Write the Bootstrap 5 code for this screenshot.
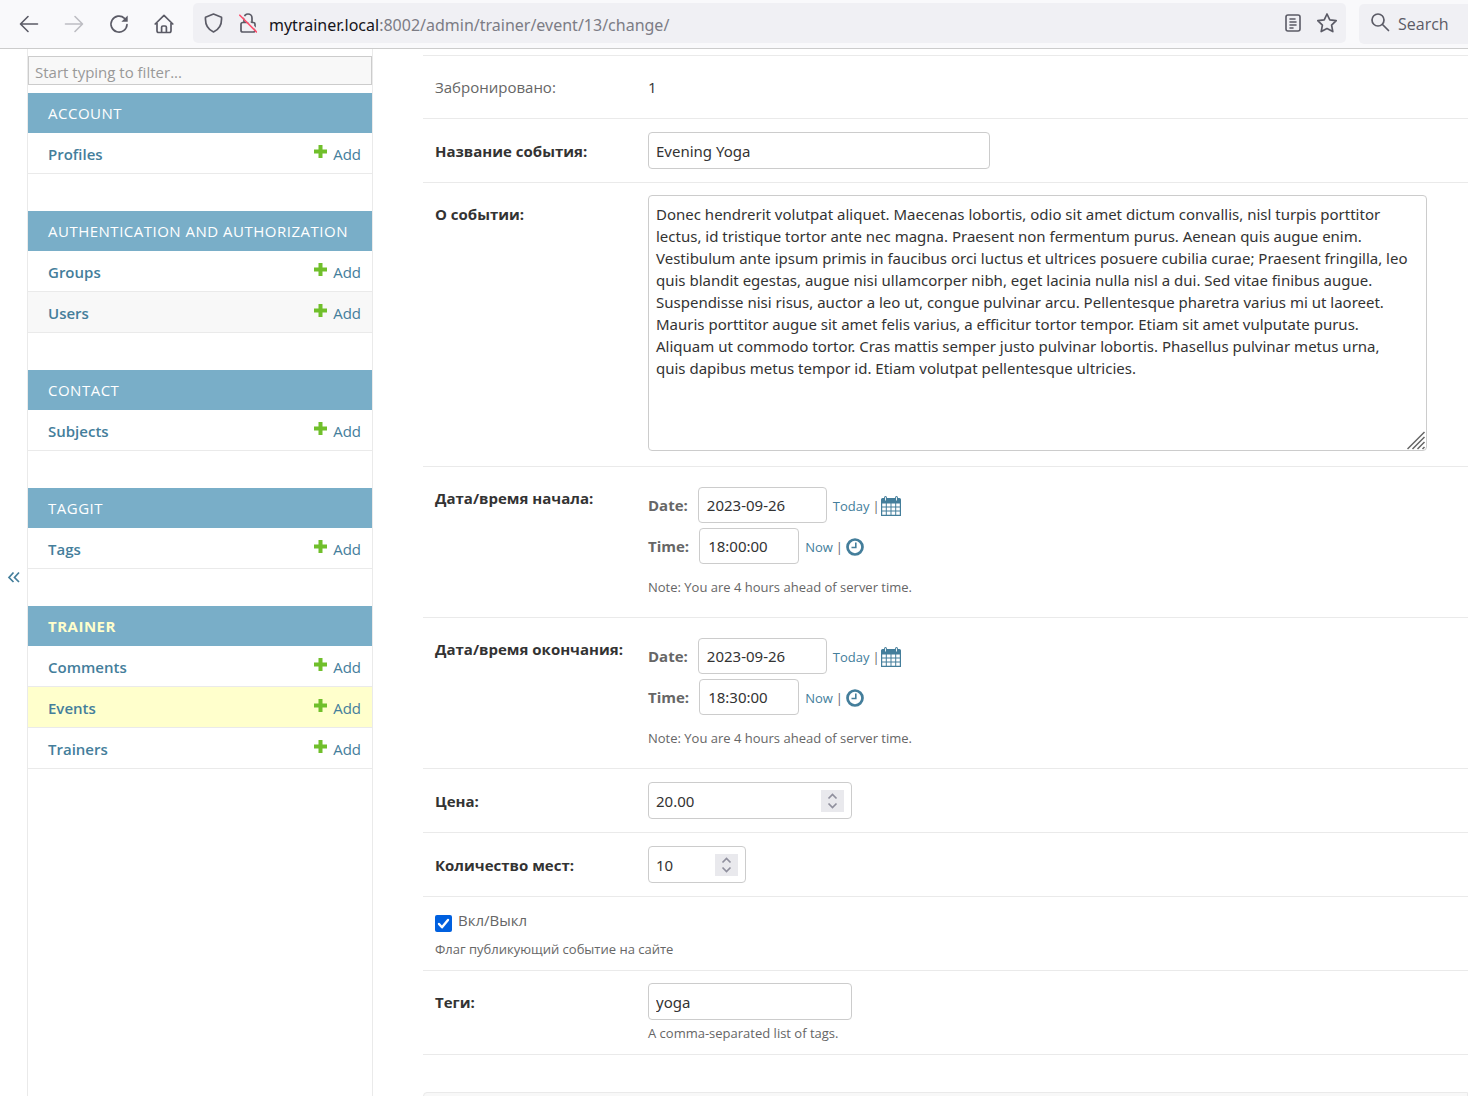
<!DOCTYPE html>
<html lang="ru">
<head>
<meta charset="utf-8">
<meta name="viewport" content="width=device-width, initial-scale=1">
<title>Change event</title>
<link href="https://cdn.jsdelivr.net/npm/bootstrap@5.3.0/dist/css/bootstrap.min.css" rel="stylesheet">
<style>
  body { font-family: "Open Sans", "Noto Sans", sans-serif; font-size: 15px; line-height: 22px; color: #333; background: #fff; }
  a { color: #447e9b; text-decoration: none; }
  svg { display: block; flex: none; }
  button { color: inherit; }

  .browser-bar { height: 49px; background: #f9f9fb; border-bottom: 1px solid #ccc; color: #5b5b66; padding-left: 16px; font-size: 16px; }
  .tool-btn { width: 25px; height: 25px; margin-right: 20px; }
  .tool-btn svg { margin: auto; }
  .url-box { height: 40px; background: #f0f0f4; border-radius: 5px; margin: 3px 0 5px -3px; padding: 0 5px 0 7px; }
  .url-text { font-family: "Noto Sans", "Open Sans", sans-serif; }
  .url-host { color: #15141a; }
  .url-rest { color: #7c7c85; }
  .search-box { width: 109px; height: 40px; background: #f0f0f4; border-radius: 5px 0 0 5px; margin-left: 13px; padding-left: 11px; }
  .search-box input { color: #5b5b66; background: none; }
  .search-box input::placeholder { color: #5b5b66; opacity: 1; }

  .side-toggle { width: 28px; border-right: 1px solid #eaeaea; }
  .side-nav { width: 345px; border-right: 1px solid #eaeaea; padding-top: 7px; }
  .nav-filter { height: 29px; border: 1px solid #ccc; background: #f8f8f8; padding: 2px 6px 0; margin-bottom: 8px; }
  .nav-filter::placeholder { color: #999; opacity: 1; }
  .app-module { margin-bottom: 37px; }
  .app-title { background: #79aec8; height: 40px; padding: 0 20px; letter-spacing: .5px; }
  .app-title a { color: #fff; }
  .app-title.current a { color: #ffc; font-weight: 700; }
  .model-line { height: 41px; border-bottom: 1px solid #eaeaea; padding: 1px 11px 0 20px; }
  .model-line.alt { background: #f8f8f8; }
  .model-line.current { background: #ffc; }
  .model-name { font-weight: 600; }
  .add-link { gap: 6px; }
  .add-link svg { margin-bottom: 5px; }

  .form-side { padding-left: 50px; padding-top: 6px; }
  .form-line { border-bottom: 1px solid #eaeaea; padding: 13px 12px; }
  .form-first { border-top: 1px solid #eaeaea; min-height: 64px; padding-top: 20px; }
  .field-label { width: 213px; padding-top: 8px; font-weight: 700; }
  .field-value { min-width: 0; }
  .form-first .field-label { padding-top: 0; font-weight: 400; color: #666; }
  .box { font-family: "Noto Sans", "Open Sans", sans-serif; border: 1px solid #ccc; border-radius: 4px; height: 37px; padding: 2px 7px; color: #333; background: #fff; }
  .w-title { width: 342px; } .w-price { width: 204px; } .w-seats { width: 98px; } .w-date { width: 129px; } .w-time { width: 100px; }
  .box[type=number] { appearance: textfield; -moz-appearance: textfield; }
  .box[type=number]::-webkit-inner-spin-button { appearance: none; -webkit-appearance: none; }
  .area-line { padding-top: 12px; padding-bottom: 15px; }
  .area-wrap { width: 779px; max-width: 100%; }
  .area { display: block; height: 256px; padding: 7px 15px 7px 7px; resize: none; overflow: hidden; }
  .grip { right: 1px; bottom: 1px; }
  .spin { right: 8px; top: 8px; width: 23px; height: 22px; background: #e9e9ed; color: #8f8f9d; }
  .when-line { padding-top: 20px; padding-bottom: 20px; }
  .when-line .field-label { padding-top: 0; }
  .when-row { margin-bottom: 5px; }
  .when-row label { font-weight: 700; color: #666; margin-right: 10px; }
  .when-row .box { height: 36px; padding-left: 8px; margin-right: 6px; }
  .when-row .quiet { gap: 3px; padding-top: 2px; }
  .when-row .cal-link { margin-left: -2px; }
  .quiet { font-size: 13px; line-height: 20px; color: #666; }
  .tick { width: 17px; height: 17px; appearance: none; background: #0060df; border-radius: 2px; }
  .tick-line { padding-top: 8px; padding-bottom: 7px; }
  .tick-label { margin-left: 6px; padding-bottom: 2px; color: #666; }
  .tick-help { padding-top: 6px; }
  .tags-line { padding-bottom: 10px; }
  .tags-help { padding-top: 3px; margin-bottom: 1px; }
  .next-block { border: 1px solid #eaeaea; border-radius: 4px 0 0 0; background: #f8f8f8; margin-top: 37px; height: 40px; }
</style>
<script src="https://cdn.jsdelivr.net/npm/bootstrap@5.3.0/dist/js/bootstrap.bundle.min.js"></script>
</head>
<body>
<svg width="0" height="0" class="position-absolute" aria-hidden="true">
  <symbol id="plus" viewBox="0 0 13 13"><path d="M4.500 0h4v4.500H13v4H8.500V13h-4V8.500H0v-4h4.500z" fill="#70bf2b"/></symbol>
  <symbol id="updown" viewBox="0 0 23 22"><path d="M7.500 8.500l4-4 4 4M7.500 13.500l4 4 4-4" fill="none" stroke="currentColor" stroke-width="1.700"/></symbol>
  <symbol id="cal" viewBox="0 0 20 20"><path fill="#447e9b" fill-rule="evenodd" d="M3 2q0-2 1.500-2T6 2h8q0-2 1.500-2T17 2h1.500Q20 2 20 3.500V20H0V3.500Q0 2 1.500 2zM1.200 7.500v3h3.600v-3zm4.600 0v3h3.700v-3zm4.700 0v3h3.700v-3zm4.700 0v3h3.600v-3zM1.200 11.500v3h3.600v-3zm4.600 0v3h3.700v-3zm4.700 0v3h3.700v-3zm4.700 0v3h3.600v-3zM1.200 15.500v3.300h3.600v-3.300zm4.600 0v3.300h3.700v-3.300zm4.700 0v3.300h3.700v-3.300zm4.700 0v3.300h3.600v-3.300z"/><path d="M4.500 1.200v3.300M15.500 1.200v3.300" stroke="#fff" stroke-width=".9"/></symbol>
  <symbol id="clock" viewBox="0 0 18 18"><circle cx="9" cy="9" r="7.500" fill="none" stroke="#447e9b" stroke-width="2.700"/><path d="M9.800 4.500v5H5.500" fill="none" stroke="#447e9b" stroke-width="1.600"/></symbol>
</svg>

<div class="vh-100 d-flex flex-column overflow-hidden">
  <header class="browser-bar d-flex align-items-center flex-shrink-0">
    <button class="tool-btn btn p-0 border-0 d-flex" aria-label="Back"><svg width="20" height="20" viewBox="0 0 20 20" fill="none" stroke="#5b5b66" stroke-width="1.600" stroke-linecap="round" stroke-linejoin="round"><path d="M18.500 10H1.800M9 2.500L1.500 10 9 17.500"/></svg></button>
    <button class="tool-btn btn p-0 border-0 d-flex" aria-label="Forward"><svg width="20" height="20" viewBox="0 0 20 20" fill="none" stroke="#bdbdc3" stroke-width="1.600" stroke-linecap="round" stroke-linejoin="round"><path d="M1.500 10h16.700M11 2.500l7.500 7.500-7.500 7.500"/></svg></button>
    <button class="tool-btn btn p-0 border-0 d-flex" aria-label="Reload"><svg width="20" height="20" viewBox="0 0 20 20" fill="none" stroke="#5b5b66" stroke-width="1.700" stroke-linecap="round"><path d="M18 10.500a8 8 0 1 1-2.500-6.200"/><path d="M18.700 1.500v6.300h-6.300z" fill="#5b5b66" stroke="none"/></svg></button>
    <button class="tool-btn btn p-0 border-0 d-flex" aria-label="Home"><svg width="20" height="20" viewBox="0 0 20 20" fill="none" stroke="#5b5b66" stroke-width="1.700" stroke-linecap="round" stroke-linejoin="round"><path d="M1.200 10L10 1.300 18.800 10M3 9v7.800q0 1.700 1.700 1.700h10.600q1.700 0 1.700-1.700V9M7.600 18.300v-5q0-1.300 1.300-1.300h2.200q1.300 0 1.300 1.300v5"/></svg></button>
    <div class="url-box d-flex align-items-center flex-grow-1">
      <svg class="ms-1" width="19" height="20" viewBox="0 0 19 20" fill="none" stroke="#5b5b66" stroke-width="1.700" stroke-linejoin="round"><path d="M9.500 1L17.500 4.200C18 11 16 16 9.500 19 3 16 1 11 1.500 4.200z"/></svg>
      <svg class="ms-3" width="18" height="20" viewBox="0 0 18 20" fill="none" stroke="#5b5b66" stroke-width="1.700"><rect x="2" y="9.500" width="14" height="9.500" rx="1.800"/><path d="M5 9.500V5a4 4 0 0 1 8 0v4.500"/><path d="M2.300 1.200L18 17" stroke="#f0f0f4" stroke-width="1.800"/><path d="M.8 2.200L17.500 19" stroke="#ff4f6e" stroke-width="1.600" stroke-linecap="round"/></svg>
      <span class="url-text ms-2 ps-1 pt-1"><span class="url-host">mytrainer.local</span><span class="url-rest">:8002/admin/trainer/event/13/change/</span></span>
      <svg class="ms-auto" width="16" height="18" viewBox="0 0 16 18" fill="none" stroke="#5b5b66" stroke-width="1.600" stroke-linecap="round"><rect x="1" y="1" width="14" height="16" rx="2"/><path d="M5 5h5M5 8h6M5 11h6M5 14h3"/></svg>
      <svg class="ms-3 me-1" width="20" height="20" viewBox="1 0 20 20" fill="none" stroke="#5b5b66" stroke-width="1.700" stroke-linejoin="round"><path d="M11 1l2.800 5.800 6.400.8-4.600 4.500 1.200 6.500L11 15.500l-5.800 3.100 1.200-6.500L1.800 7.600l6.400-.8z"/></svg>
    </div>
    <div class="search-box d-flex align-items-center">
      <svg class="mb-1" width="20" height="20" viewBox="0 0 20 20" fill="none" stroke="#5b5b66" stroke-width="1.700" stroke-linecap="round"><circle cx="8" cy="8" r="6"/><path d="M12.500 12.500l6 6"/></svg>
      <input class="border-0 p-0 ms-2 w-100" type="text" placeholder="Search" aria-label="Search">
    </div>
  </header>

  <div class="d-flex flex-grow-1 overflow-hidden">
    <button class="side-toggle btn rounded-0 border-top-0 border-bottom-0 border-start-0 p-0 pt-2 flex-shrink-0" aria-label="Toggle navigation"><svg class="mx-auto" width="14" height="14" viewBox="0 0 14 14" fill="none" stroke="#447e9b" stroke-width="1.700"><path d="M6.500 2.500L2 7.500l4.500 4.500M12 2.500L7.500 7.500l4.500 4.500"/></svg></button>
    <nav class="side-nav flex-shrink-0">
      <input class="nav-filter w-100 d-block" type="text" placeholder="Start typing to filter..." aria-label="Filter navigation items">
      <section class="app-module">
        <div class="app-title d-flex align-items-center"><a href="#">ACCOUNT</a></div>
        <div class="model-line d-flex align-items-center justify-content-between"><a class="model-name" href="#">Profiles</a><a class="add-link d-flex align-items-center" href="#"><svg width="13" height="13"><use href="#plus"/></svg>Add</a></div>
      </section>
      <section class="app-module">
        <div class="app-title d-flex align-items-center"><a href="#">AUTHENTICATION AND AUTHORIZATION</a></div>
        <div class="model-line d-flex align-items-center justify-content-between"><a class="model-name" href="#">Groups</a><a class="add-link d-flex align-items-center" href="#"><svg width="13" height="13"><use href="#plus"/></svg>Add</a></div>
        <div class="model-line alt d-flex align-items-center justify-content-between"><a class="model-name" href="#">Users</a><a class="add-link d-flex align-items-center" href="#"><svg width="13" height="13"><use href="#plus"/></svg>Add</a></div>
      </section>
      <section class="app-module">
        <div class="app-title d-flex align-items-center"><a href="#">CONTACT</a></div>
        <div class="model-line d-flex align-items-center justify-content-between"><a class="model-name" href="#">Subjects</a><a class="add-link d-flex align-items-center" href="#"><svg width="13" height="13"><use href="#plus"/></svg>Add</a></div>
      </section>
      <section class="app-module">
        <div class="app-title d-flex align-items-center"><a href="#">TAGGIT</a></div>
        <div class="model-line d-flex align-items-center justify-content-between"><a class="model-name" href="#">Tags</a><a class="add-link d-flex align-items-center" href="#"><svg width="13" height="13"><use href="#plus"/></svg>Add</a></div>
      </section>
      <section class="app-module">
        <div class="app-title current d-flex align-items-center"><a href="#">TRAINER</a></div>
        <div class="model-line d-flex align-items-center justify-content-between"><a class="model-name" href="#">Comments</a><a class="add-link d-flex align-items-center" href="#"><svg width="13" height="13"><use href="#plus"/></svg>Add</a></div>
        <div class="model-line current d-flex align-items-center justify-content-between"><a class="model-name" href="#">Events</a><a class="add-link d-flex align-items-center" href="#"><svg width="13" height="13"><use href="#plus"/></svg>Add</a></div>
        <div class="model-line d-flex align-items-center justify-content-between"><a class="model-name" href="#">Trainers</a><a class="add-link d-flex align-items-center" href="#"><svg width="13" height="13"><use href="#plus"/></svg>Add</a></div>
      </section>
    </nav>

    <main class="form-side flex-grow-1 overflow-hidden">
      <form>
        <div class="form-line form-first d-flex"><span class="field-label flex-shrink-0">Забронировано:</span><span class="field-value">1</span></div>
        <div class="form-line d-flex">
          <label class="field-label flex-shrink-0" for="title">Название события:</label>
          <input class="box w-title" id="title" type="text" value="Evening Yoga">
        </div>
        <div class="form-line area-line d-flex">
          <label class="field-label flex-shrink-0" for="about">О событии:</label>
          <div class="area-wrap position-relative">
            <textarea class="box area w-100" id="about">Donec hendrerit volutpat aliquet. Maecenas lobortis, odio sit amet dictum convallis, nisl turpis porttitor lectus, id tristique tortor ante nec magna. Praesent non fermentum purus. Aenean quis augue enim. Vestibulum ante ipsum primis in faucibus orci luctus et ultrices posuere cubilia curae; Praesent fringilla, leo quis blandit egestas, augue nisi ullamcorper nibh, eget lacinia nulla nisl a dui. Sed vitae finibus augue. Suspendisse nisi risus, auctor a leo ut, congue pulvinar arcu. Pellentesque pharetra varius mi ut laoreet. Mauris porttitor augue sit amet felis varius, a efficitur tortor tempor. Etiam sit amet vulputate purus. Aliquam ut commodo tortor. Cras mattis semper justo pulvinar lobortis. Phasellus pulvinar metus urna, quis dapibus metus tempor id. Etiam volutpat pellentesque ultricies.</textarea>
            <svg class="grip position-absolute" width="19" height="19" viewBox="0 0 19 19" fill="none" stroke="#666" stroke-width="1.500"><path d="M.5 18L17.500 1M5.500 18l12-12M10.500 18l7-7M15.500 18l2-2"/></svg>
          </div>
        </div>
        <div class="form-line when-line d-flex">
          <span class="field-label flex-shrink-0">Дата/время начала:</span>
          <div class="field-value">
            <div class="when-row d-flex align-items-center"><label for="d1">Date:</label><input class="box w-date" id="d1" type="text" value="2023-09-26"><span class="quiet d-flex align-items-center"><a href="#">Today</a>|<a class="cal-link" href="#" aria-label="Choose a date"><svg width="20" height="20"><use href="#cal"/></svg></a></span></div>
            <div class="when-row d-flex align-items-center"><label for="t1">Time:</label><input class="box w-time" id="t1" type="text" value="18:00:00"><span class="quiet d-flex align-items-center"><a href="#">Now</a>|<a href="#" aria-label="Choose a time"><svg width="18" height="18"><use href="#clock"/></svg></a></span></div>
            <div class="quiet pt-2">Note: You are 4 hours ahead of server time.</div>
          </div>
        </div>
        <div class="form-line when-line d-flex">
          <span class="field-label flex-shrink-0">Дата/время окончания:</span>
          <div class="field-value">
            <div class="when-row d-flex align-items-center"><label for="d2">Date:</label><input class="box w-date" id="d2" type="text" value="2023-09-26"><span class="quiet d-flex align-items-center"><a href="#">Today</a>|<a class="cal-link" href="#" aria-label="Choose a date"><svg width="20" height="20"><use href="#cal"/></svg></a></span></div>
            <div class="when-row d-flex align-items-center"><label for="t2">Time:</label><input class="box w-time" id="t2" type="text" value="18:30:00"><span class="quiet d-flex align-items-center"><a href="#">Now</a>|<a href="#" aria-label="Choose a time"><svg width="18" height="18"><use href="#clock"/></svg></a></span></div>
            <div class="quiet pt-2">Note: You are 4 hours ahead of server time.</div>
          </div>
        </div>
        <div class="form-line d-flex">
          <label class="field-label flex-shrink-0" for="price">Цена:</label>
          <div class="position-relative"><input class="box w-price" id="price" type="number" step="0.01" value="20.00"><svg class="spin position-absolute"><use href="#updown"/></svg></div>
        </div>
        <div class="form-line d-flex">
          <label class="field-label flex-shrink-0" for="seats">Количество мест:</label>
          <div class="position-relative"><input class="box w-seats" id="seats" type="number" value="10"><svg class="spin position-absolute"><use href="#updown"/></svg></div>
        </div>
        <div class="form-line tick-line">
          <div class="d-flex align-items-center position-relative pt-1">
            <input class="tick mt-1" id="on" type="checkbox" checked><svg class="position-absolute mt-1" width="17" height="17" viewBox="0 0 17 17" fill="none" stroke="#fff" stroke-width="2.400" stroke-linecap="round" stroke-linejoin="round" pointer-events="none"><path d="M4 9l3 3.300 6-7.300"/></svg>
            <label class="tick-label" for="on">Вкл/Выкл</label>
          </div>
          <div class="quiet tick-help mb-1">Флаг публикующий событие на сайте</div>
        </div>
        <div class="form-line area-line tags-line d-flex">
          <label class="field-label flex-shrink-0" for="tags">Теги:</label>
          <div><input class="box w-price" id="tags" type="text" value="yoga"><div class="quiet tags-help">A comma-separated list of tags.</div></div>
        </div>
        <div class="next-block"></div>
      </form>
    </main>
  </div>
</div>
</body>
</html>
